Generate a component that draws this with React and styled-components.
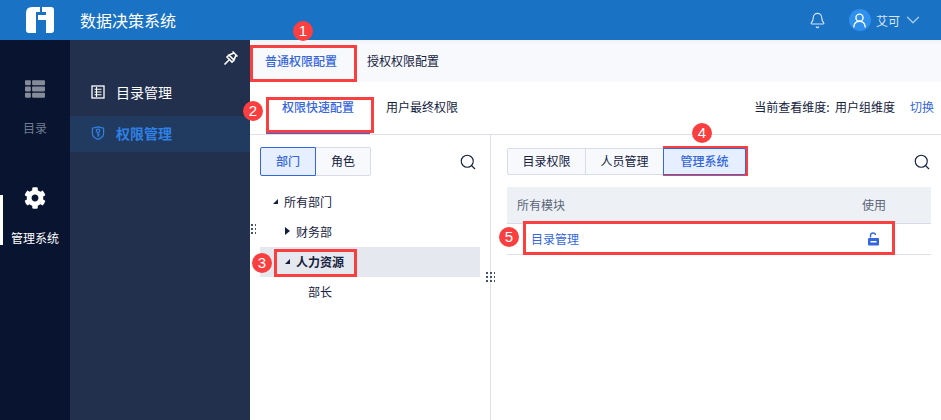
import React from "react";
import styled, { createGlobalStyle } from "styled-components";
import { Bell, ChevronDown, Search, UserRound } from "lucide-react";
import { FaCog, FaThList } from "react-icons/fa";

const GlobalStyle = createGlobalStyle`
  *, *::before, *::after {
    box-sizing: border-box;
  }
  html, body {
    margin: 0;
    padding: 0;
    background: #fff;
    overflow: hidden;
  }
  body {
    font-family: "Noto Sans CJK SC", "Liberation Sans", sans-serif;
    font-size: 12px;
    color: #14213d;
  }
`;

const Page = styled.div`
  position: relative;
  width: 941px;
  height: 420px;
  overflow: hidden;
  display: flex;
  flex-direction: column;
`;

const Header = styled.header`
  height: 40px;
  flex: none;
  background: #1a72c4;
  display: flex;
  align-items: center;
  padding: 0 17px 0 26px;
  color: #fff;
`;

const Title = styled.div`
  font-size: 16px;
  margin-left: 26px;
`;

const HeaderRight = styled.div`
  margin-left: auto;
  display: flex;
  align-items: center;
`;

const Avatar = styled.div`
  width: 22px;
  height: 22px;
  border-radius: 50%;
  background: #2f8fec;
  margin-left: 23px;
  display: flex;
  align-items: center;
  justify-content: center;
`;

const UserName = styled.span`
  font-size: 12px;
  margin: 0 2px 0 5px;
  color: #d5e6f7;
`;

const Body = styled.div`
  flex: 1;
  display: flex;
  min-height: 0;
`;

const Rail = styled.nav`
  width: 70px;
  flex: none;
  background: #081430;
  display: flex;
  flex-direction: column;
  padding-top: 29px;
`;

const RailItem = styled.div`
  position: relative;
  height: 70px;
  margin-bottom: 38px;
  display: flex;
  flex-direction: column;
  align-items: center;
  gap: ${(p) => (p.$active ? "21px" : "21px")};
  padding-top: 10px;
  color: ${(p) => (p.$active ? "#fff" : "#6f7d90")};
  line-height: 16px;
  ${(p) =>
    p.$active &&
    `&::before {
      content: "";
      position: absolute;
      left: 0;
      top: 18px;
      width: 3px;
      height: 50px;
      background: #fff;
    }`}
`;

const NavPanel = styled.nav`
  width: 180px;
  flex: none;
  background: #22304e;
  display: flex;
  flex-direction: column;
  padding-top: 10px;
`;

const PinRow = styled.div`
  height: 16px;
  display: flex;
  justify-content: flex-end;
  padding-right: 11px;
  margin-bottom: 9px;
`;

const NavItem = styled.div`
  height: 36px;
  display: flex;
  align-items: center;
  gap: 11px;
  padding: 0 0 2px 21px;
  margin-bottom: 5px;
  font-size: 14px;
  font-weight: ${(p) => (p.$active ? 700 : 400)};
  color: ${(p) => (p.$active ? "#2f80e4" : "#fff")};
  background: ${(p) => (p.$active ? "#213b60" : "transparent")};
`;

const Main = styled.main`
  flex: 1;
  min-width: 0;
  display: flex;
  flex-direction: column;
`;

const TabBar = styled.div`
  height: 42px;
  flex: none;
  background: linear-gradient(#f0f2f7, #f8f9fd 5px);
  display: flex;
  align-items: center;
  padding: 0 0 2px 15px;
  gap: 30px;
`;

const Tab = styled.div`
  color: ${(p) => (p.$active ? "#3566dc" : "#14213d")};
  font-weight: ${(p) => (p.$active ? 500 : 400)};
`;

const SubBar = styled.div`
  height: 53px;
  flex: none;
  border-bottom: 1px solid #dde1ea;
  display: flex;
  align-items: flex-start;
  padding: 16px 7px 0 16px;
  line-height: 18px;
`;

const SubTab = styled.div`
  height: 36px;
  padding: 0 16px;
  margin-right: ${(p) => (p.$active ? "0" : "auto")};
  color: ${(p) => (p.$active ? "#3566dc" : "#14213d")};
  font-weight: ${(p) => (p.$active ? 500 : 400)};
  border-bottom: 2px solid ${(p) => (p.$active ? "#3566dc" : "transparent")};
`;

const Dimension = styled.div`
  display: flex;
  gap: 15px;
`;

const LinkText = styled.span`
  color: #3566dc;
`;

const Split = styled.div`
  flex: 1;
  display: flex;
  min-height: 0;
`;

const LeftPane = styled.section`
  width: 241px;
  flex: none;
  border-right: 1px solid #dde1ea;
  padding-top: 12px;
`;

const RightPane = styled.section`
  flex: 1;
  min-width: 0;
  padding: 13px 10px 0 16px;
`;

const ToolRow = styled.div`
  display: flex;
  align-items: center;
  justify-content: space-between;
  padding-right: ${(p) => p.$inset || 0}px;
  padding-left: ${(p) => p.$start || 0}px;
`;

const Segments = styled.div`
  display: flex;
`;

const Segment = styled.div`
  width: ${(p) => p.$w}px;
  height: ${(p) => p.$h}px;
  display: flex;
  align-items: center;
  justify-content: center;
  padding-bottom: 2px;
  margin-left: -1px;
  position: relative;
  z-index: ${(p) => (p.$active ? 1 : 0)};
  border: 1px solid ${(p) => (p.$active ? "#3566dc" : "#d8dce6")};
  background: ${(p) => (p.$active ? "#e6efff" : "#f8f9fd")};
  color: ${(p) => (p.$active ? "#3566dc" : "#14213d")};
  font-weight: ${(p) => (p.$active ? 500 : 400)};
  &:first-child {
    margin-left: 0;
    border-radius: 2px 0 0 2px;
  }
  &:last-child {
    border-radius: 0 2px 2px 0;
  }
`;

const Tree = styled.div`
  margin: 11px 10px 0;
`;

const TreeRow = styled.div`
  height: 30px;
  display: flex;
  align-items: center;
  padding: 0 0 2px ${(p) => p.$indent}px;
  background: ${(p) => (p.$selected ? "#e6e8f0" : "transparent")};
  font-weight: ${(p) => (p.$selected ? 700 : 400)};
`;

const Caret = styled.i`
  width: 0;
  height: 0;
  margin-right: 6px;
  ${(p) =>
    p.$open
      ? `border-left: 5px solid transparent; border-bottom: 5px solid #14213d;`
      : `border-top: 4px solid transparent; border-bottom: 4px solid transparent; border-left: 5px solid #14213d;`}
  margin-left: 0;
`;

const TableHead = styled.div`
  height: 37px;
  margin-top: 12px;
  border-bottom: 1px solid #d8dce6;
  background: #edf0f5;
  color: #5b6679;
  display: flex;
  align-items: center;
  justify-content: space-between;
  padding: 0 45px 2px 10px;
`;

const TableRow = styled.div`
  height: 31px;
  border-bottom: 1px solid #dde1ea;
  color: #3566dc;
  display: flex;
  align-items: center;
  justify-content: space-between;
  padding: 0 51px 0 24px;
`;

const CellText = styled.span`
  margin-bottom: 2px;
`;

// drag handles and red callouts lie over the page
const Handle = styled.div`
  position: absolute;
  left: ${(p) => p.$x}px;
  top: ${(p) => p.$y}px;
  width: ${(p) => p.$w}px;
  height: 12px;
  background-image: radial-gradient(circle at 1px 1px, #47536a 1px, transparent 1px);
  background-size: 4px 4px;
`;

const RedBox = styled.div`
  position: absolute;
  left: ${(p) => p.$x}px;
  top: ${(p) => p.$y}px;
  width: ${(p) => p.$w}px;
  height: ${(p) => p.$h}px;
  border: 3px solid #f93f3f;
`;

const Badge = styled.div`
  position: absolute;
  left: ${(p) => p.$x - 10}px;
  top: ${(p) => p.$y - 10}px;
  width: 20px;
  height: 20px;
  border-radius: 50%;
  background: #f93f3f;
  color: #fff;
  font-family: "Liberation Sans", sans-serif;
  font-size: 15px;
  line-height: 20px;
  text-align: center;
`;

const Logo = () => (
  <svg width="28" height="26" viewBox="0 0 28 26" fill="#fff">
    <path d="M6 0H14V5H10V26H3Q0 26 0 23V6Q0 0 6 0Z" />
    <path d="M16 0H25Q28 0 28 3V23Q28 26 25 26H20V13H12V8H20V5H16Z" />
  </svg>
);

const PinIcon = () => (
  <svg width="16" height="16" viewBox="0 0 16 16" fill="none" stroke="#fff" strokeWidth="1.6">
    <path d="M9.5 1.5L14.5 6.5M11 3L6 5L11 10L13 5M6 5L4 7L9 12L11 10M6 10L1.5 14.5" />
  </svg>
);

const CatalogIcon = () => (
  <svg width="14" height="14" viewBox="0 0 14 14" fill="none" stroke="#fff" strokeWidth="1.3">
    <rect x="1" y="1" width="12" height="12" />
    <path d="M3.5 4.2H10.5M3.5 7H10.5M3.5 9.8H10.5M5.5 2V12" strokeWidth="1.1" />
  </svg>
);

const ShieldKeyIcon = () => (
  <svg width="14" height="14" viewBox="0 0 14 14" fill="none" stroke="#2f80e4" strokeWidth="1.2">
    <path d="M7 .8L12.6 2.2V7.4C12.6 10.2 10.2 12.2 7 13.4C3.8 12.2 1.4 10.2 1.4 7.4V2.2Z" />
    <circle cx="7" cy="4.8" r="1.7" />
    <path d="M7 6.5V10.6M7 8.4H8.6M7 10H8.4" />
  </svg>
);

const UnlockIcon = () => (
  <svg width="13" height="14" viewBox="0 0 13 14">
    <path d="M3.5 5.5V3.3C3.5 1.9 4.6 1 6 1C7.3 1 8.3 1.8 8.5 3" fill="none" stroke="#3566dc" strokeWidth="1.4" />
    <rect x="1" y="6" width="11" height="7.5" rx="1" fill="#3566dc" />
    <rect x="3.5" y="9" width="6" height="1.5" fill="#fff" />
  </svg>
);

const callouts = [
  { n: 1, x: 303, y: 31, box: { x: 250, y: 45, w: 107, h: 37 } },
  { n: 2, x: 253, y: 111, box: { x: 266, y: 97, w: 108, h: 36 } },
  { n: 3, x: 262, y: 263, box: { x: 274, y: 249, w: 83, h: 28 } },
  { n: 4, x: 702, y: 133, box: { x: 663, y: 146, w: 85, h: 30 } },
  { n: 5, x: 509, y: 237, box: { x: 523, y: 221, w: 372, h: 34 } },
];

export default function App() {
  return (
    <Page>
      <GlobalStyle />
      <Header>
        <Logo />
        <Title>数据决策系统</Title>
        <HeaderRight>
          <Bell size={17} color="#d5e6f7" strokeWidth={1.6} />
          <Avatar>
            <UserRound size={17} color="#fff" strokeWidth={2} />
          </Avatar>
          <UserName>艾可</UserName>
          <ChevronDown size={22} color="#a8cbec" strokeWidth={1.4} />
        </HeaderRight>
      </Header>
      <Body>
        <Rail>
          <RailItem>
            <FaThList size={20} color="#858c99" />
            <span>目录</span>
          </RailItem>
          <RailItem $active>
            <FaCog size={22} color="#fff" />
            <span>管理系统</span>
          </RailItem>
        </Rail>
        <NavPanel>
          <PinRow>
            <PinIcon />
          </PinRow>
          <NavItem>
            <CatalogIcon />
            目录管理
          </NavItem>
          <NavItem $active>
            <ShieldKeyIcon />
            权限管理
          </NavItem>
        </NavPanel>
        <Main>
          <TabBar>
            <Tab $active>普通权限配置</Tab>
            <Tab>授权权限配置</Tab>
          </TabBar>
          <SubBar>
            <SubTab $active>权限快速配置</SubTab>
            <SubTab>用户最终权限</SubTab>
            <Dimension>
              <span>当前查看维度:&nbsp;&nbsp;用户组维度</span>
              <LinkText>切换</LinkText>
            </Dimension>
          </SubBar>
          <Split>
            <LeftPane>
              <ToolRow $start={10} $inset={13}>
                <Segments>
                  <Segment $w={56} $h={29} $active>部门</Segment>
                  <Segment $w={56} $h={29}>角色</Segment>
                </Segments>
                <Search size={18} color="#14213d" strokeWidth={1.5} />
              </ToolRow>
              <Tree>
                <TreeRow $indent={13}><Caret $open />所有部门</TreeRow>
                <TreeRow $indent={25}><Caret />财务部</TreeRow>
                <TreeRow $indent={25} $selected><Caret $open />人力资源</TreeRow>
                <TreeRow $indent={48}>部长</TreeRow>
              </Tree>
            </LeftPane>
            <RightPane>
              <ToolRow>
                <Segments>
                  <Segment $w={79} $h={27}>目录权限</Segment>
                  <Segment $w={79} $h={27}>人员管理</Segment>
                  <Segment $w={83} $h={27} $active>管理系统</Segment>
                </Segments>
                <Search size={18} color="#14213d" strokeWidth={1.5} />
              </ToolRow>
              <TableHead>
                <span>所有模块</span>
                <span>使用</span>
              </TableHead>
              <TableRow>
                <CellText>目录管理</CellText>
                <UnlockIcon />
              </TableRow>
            </RightPane>
          </Split>
        </Main>
      </Body>
      <Handle $x={251} $y={224} $w={5} />
      <Handle $x={486} $y={272} $w={9} />
      {callouts.map((c) => (
        <React.Fragment key={c.n}>
          <RedBox $x={c.box.x} $y={c.box.y} $w={c.box.w} $h={c.box.h} />
          <Badge $x={c.x} $y={c.y}>{c.n}</Badge>
        </React.Fragment>
      ))}
    </Page>
  );
}
